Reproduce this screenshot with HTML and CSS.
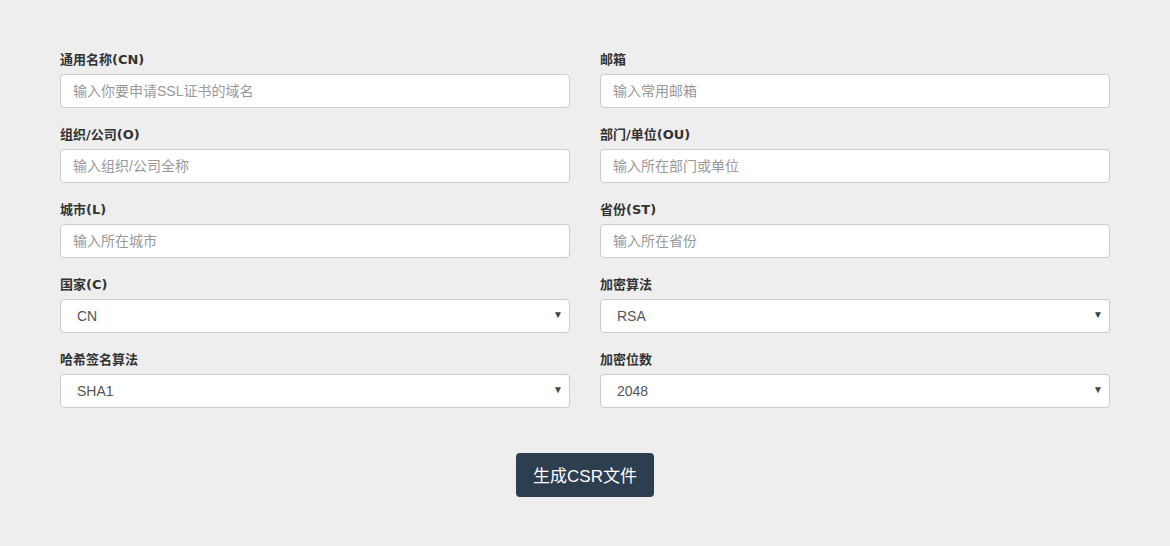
FILE: index.html
```html
<!DOCTYPE html>
<html lang="zh-CN">
<head>
  <meta charset="UTF-8" />
  <meta name="viewport" content="width=device-width, initial-scale=1.0"/>
  <title>生成CSR文件</title>
  <link rel="stylesheet" href="styles.css">
</head>
<body>
  <div class="container">
    <form class="csr-form">
      <div class="grid">
        <div class="form-group">
          <label>通用名称(CN)</label>
          <input type="text" class="form-control" placeholder="输入你要申请SSL证书的域名">
        </div>
        <div class="form-group">
          <label>邮箱</label>
          <input type="text" class="form-control" placeholder="输入常用邮箱">
        </div>
        <div class="form-group">
          <label>组织/公司(O)</label>
          <input type="text" class="form-control" placeholder="输入组织/公司全称">
        </div>
        <div class="form-group">
          <label>部门/单位(OU)</label>
          <input type="text" class="form-control" placeholder="输入所在部门或单位">
        </div>
        <div class="form-group">
          <label>城市(L)</label>
          <input type="text" class="form-control" placeholder="输入所在城市">
        </div>
        <div class="form-group">
          <label>省份(ST)</label>
          <input type="text" class="form-control" placeholder="输入所在省份">
        </div>
        <div class="form-group">
          <label>国家(C)</label>
          <div class="select-wrap">
            <select class="form-control">
              <option>CN</option>
              <option>US</option>
            </select>
          </div>
        </div>
        <div class="form-group">
          <label>加密算法</label>
          <div class="select-wrap">
            <select class="form-control">
              <option>RSA</option>
              <option>ECC</option>
            </select>
          </div>
        </div>
        <div class="form-group">
          <label>哈希签名算法</label>
          <div class="select-wrap">
            <select class="form-control">
              <option>SHA1</option>
              <option>SHA256</option>
            </select>
          </div>
        </div>
        <div class="form-group">
          <label>加密位数</label>
          <div class="select-wrap">
            <select class="form-control">
              <option>2048</option>
              <option>4096</option>
            </select>
          </div>
        </div>
      </div>
      <div class="actions">
        <button type="button" class="btn">生成CSR文件</button>
      </div>
    </form>
  </div>
</body>
</html>
```

FILE: styles.css
```css
body {
  margin: 0;
  background: #eeeeee;
  font-family: "Liberation Sans", "Noto Sans CJK SC", sans-serif;
  font-size: 14px;
  color: #333;
}

.container {
  width: 1050px;
  margin: 0 auto;
  padding-top: 49px;
}

.grid {
  display: grid;
  grid-template-columns: 1fr 1fr;
  column-gap: 30px;
}

.form-group {
  margin-bottom: 16px;
}

.form-group label {
  display: block;
  font-family: "DejaVu Sans", "Noto Sans CJK SC", sans-serif;
  font-size: 13px;
  font-weight: bold;
  line-height: 22px;
  margin-bottom: 3px;
}

.form-control {
  display: block;
  box-sizing: border-box;
  width: 100%;
  height: 34px;
  padding: 6px 12px;
  font-family: inherit;
  font-size: 14px;
  color: #555;
  background: #fff;
  border: 1px solid #ccc;
  border-radius: 4px;
  outline: none;
}

.form-control::placeholder {
  color: #999;
}

.select-wrap {
  position: relative;
}

.select-wrap select {
  appearance: none;
  -webkit-appearance: none;
  padding-left: 16px;
}

.select-wrap::after {
  content: "▼";
  position: absolute;
  right: 7px;
  top: 10px;
  font-size: 10px;
  line-height: 12px;
  color: #444;
  pointer-events: none;
}

.actions {
  text-align: center;
  margin-top: 29px;
}

.btn {
  height: 44px;
  padding: 0 17px 2px;
  font-family: inherit;
  font-size: 17px;
  color: #fff;
  background: #2c3e50;
  border: none;
  border-radius: 4px;
  cursor: pointer;
}
```
